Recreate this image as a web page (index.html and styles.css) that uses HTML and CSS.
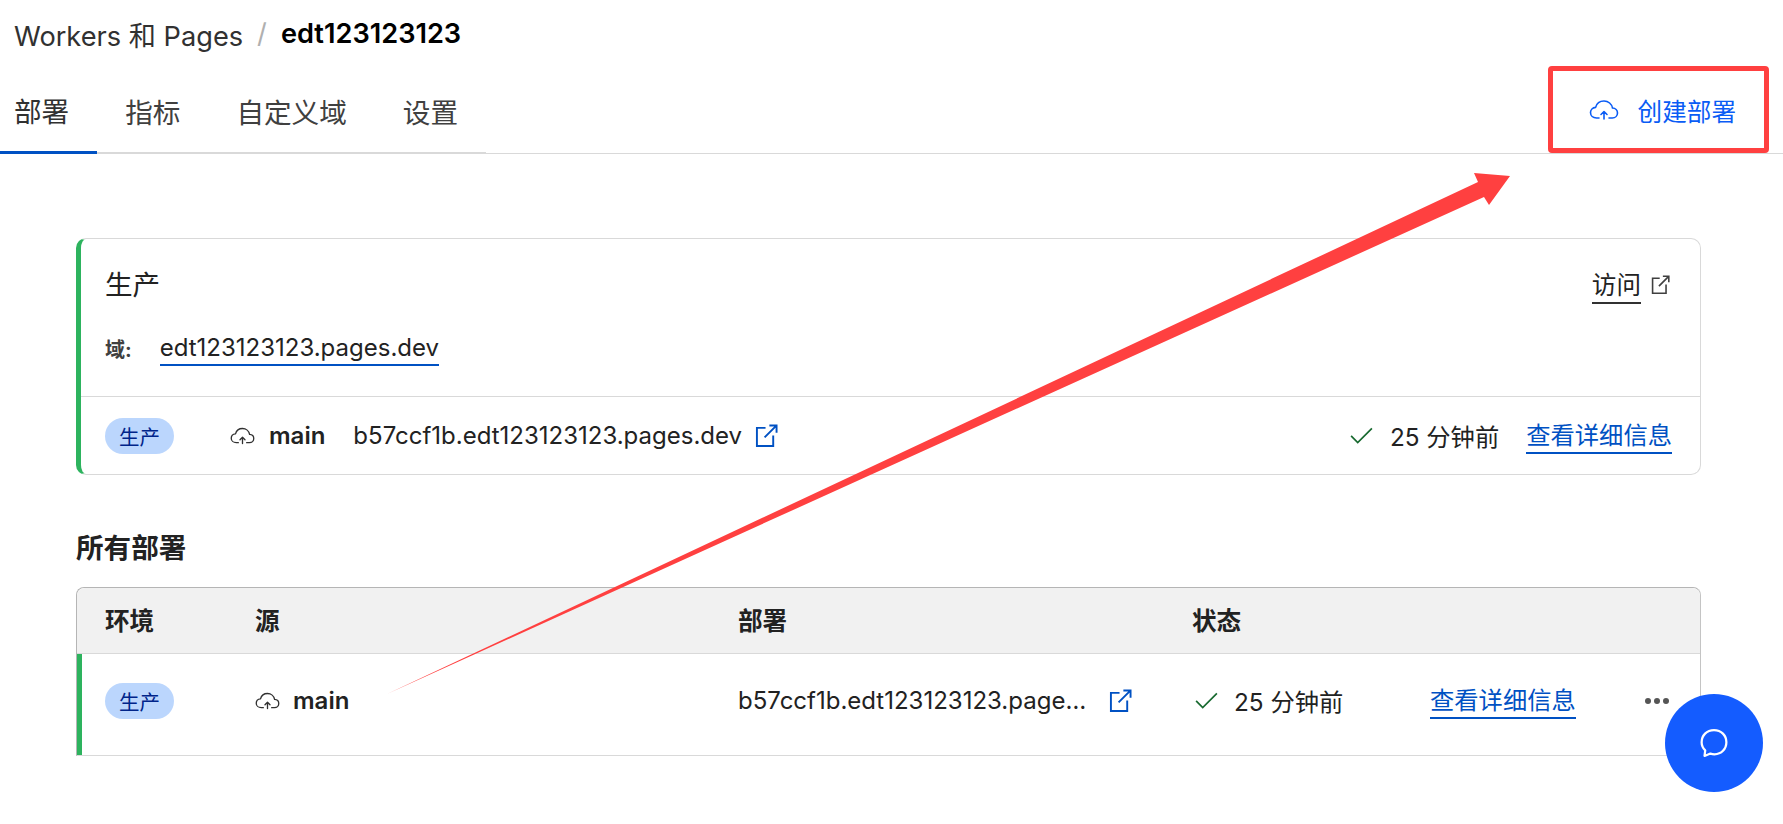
FILE: index.html
```html
<!DOCTYPE html>
<html lang="zh-CN">
<head>
    <meta charset="UTF-8">
    <title>edt123123123 - Workers 和 Pages</title>
    <link rel="stylesheet" href="styles.css">
</head>
<body>
    <svg width="0" height="0" class="defs">
        <symbol id="cloud" viewBox="0 0 30 24">
            <path fill="none" stroke="currentColor" stroke-width="1.6" stroke-linecap="round" stroke-linejoin="round" d="M10 20H7.500C4 20 1.500 17.600 1.500 14.600 1.500 11.800 3.700 9.600 6.600 9.400 7.600 5.600 11 3 15 3c4.300 0 7.800 3 8.500 7 2.900.2 5 2.300 5 5 0 2.800-2.200 5-5.200 5H20"/>
            <path fill="none" stroke="currentColor" stroke-width="1.600" stroke-linecap="round" stroke-linejoin="round" d="M15 21V14M12 16.500 15 13.500l3 3"/>
        </symbol>
        <symbol id="external" viewBox="0 0 24 24">
            <path fill="none" stroke="currentColor" stroke-width="2" d="M11 4H2V23H19V12"/>
            <path fill="none" stroke="currentColor" stroke-width="2" d="M10 14 22 2M15 1.500H22.500V9"/>
        </symbol>
        <symbol id="check" viewBox="0 0 24 18">
            <path fill="none" stroke="currentColor" stroke-width="1.800" d="M1 9.500 8 16.500 23 1.500"/>
        </symbol>
    </svg>

    <header class="page-head">
        <div class="crumbs">
            <span>Workers 和 Pages</span>
            <span class="crumb-sep">/</span>
            <strong>edt123123123</strong>
        </div>
        <div class="tabs-row">
            <nav class="tabs">
                <a class="tab active">部署</a>
                <a class="tab">指标</a>
                <a class="tab">自定义域</a>
                <a class="tab">设置</a>
            </nav>
            <a class="create-btn">
                <svg class="icon-cloud-lg"><use href="#cloud"/></svg>
                创建部署
            </a>
        </div>
    </header>

    <main class="content">
        <section class="prod-card">
            <div class="prod-top">
                <div class="prod-info">
                    <h2 class="prod-title">生产</h2>
                    <div class="domain-line">
                        <span class="domain-label">域:</span>
                        <a class="link-text">edt123123123.pages.dev</a>
                    </div>
                </div>
                <a class="visit">
                    <span>访问</span>
                    <svg class="icon-visit"><use href="#external"/></svg>
                </a>
            </div>
            <div class="prod-bottom">
                <span class="badge">生产</span>
                <svg class="icon-cloud"><use href="#cloud"/></svg>
                <b class="branch">main</b>
                <span class="deploy-url">b57ccf1b.edt123123123.pages.dev</span>
                <svg class="icon-ext"><use href="#external"/></svg>
                <span class="spacer"></span>
                <svg class="icon-check"><use href="#check"/></svg>
                <span class="status-text">25 分钟前</span>
                <a class="details">查看详细信息</a>
            </div>
        </section>

        <h3 class="all-title">所有部署</h3>

        <section class="deploy-table">
            <div class="table-row table-head">
                <span>环境</span>
                <span>源</span>
                <span>部署</span>
                <span>状态</span>
            </div>
            <div class="table-row table-body">
                <span class="cell"><span class="badge">生产</span></span>
                <span class="cell">
                    <svg class="icon-cloud"><use href="#cloud"/></svg>
                    <b class="branch">main</b>
                </span>
                <span class="cell">
                    <span class="deploy-url clipped">b57ccf1b.edt123123123.pages.dev</span>
                    <svg class="icon-ext"><use href="#external"/></svg>
                </span>
                <span class="cell">
                    <svg class="icon-check"><use href="#check"/></svg>
                    <span class="status-text">25 分钟前</span>
                </span>
                <span class="cell"><a class="details">查看详细信息</a></span>
                <span class="cell dots"><i></i><i></i><i></i></span>
            </div>
        </section>
    </main>

    <!-- annotation drawn over the screenshot -->
    <div class="red-box"></div>
    <svg class="arrow" width="1783" height="824" viewBox="0 0 1783 824">
        <polygon fill="#ff4040" points="387,694 1478,182 1474,173 1510,176 1489,205 1484,197"/>
    </svg>

    <button class="chat-btn">
        <svg viewBox="0 0 32 32" width="36" height="36">
            <path fill="none" stroke="#fff" stroke-width="2" stroke-linejoin="round" d="M16 4.500c6.500 0 11 4.800 11 10.800S22.500 26 16.500 26c-1.300 0-2.600-.2-3.700-.6L7.600 27.500l.6-5C6 20.500 5 18 5 15.300 5 9.300 9.500 4.500 16 4.500z"/>
        </svg>
    </button>
</body>
</html>
```

FILE: styles.css
```css
* {
    box-sizing: border-box;
}
body {
    margin: 0;
    height: 824px;
    overflow: hidden;
    background-color: #fff;
    color: #222;
    font-family: Inter, "Noto Sans CJK SC", sans-serif;
    font-size: 24px;
    position: relative;
}
.defs {
    position: absolute;
}
a {
    color: inherit;
}

/* header */
.crumbs {
    display: flex;
    align-items: center;
    height: 69px;
    padding: 0 0 2px 14px;
    font-size: 27.2px;
    color: #313131;
}
.crumb-sep {
    margin: 0 14px;
    color: #b0b0b0;
}
.crumbs strong {
    font-weight: 600;
    color: #000;
}
.tabs-row {
    display: flex;
    justify-content: space-between;
    height: 85px;
    border-bottom: 1px solid #d9d9d9;
}
.tabs {
    display: flex;
    margin-left: -14px;
    border-bottom: 2px solid #d9d9d9;
    height: 85px;
}
.tab {
    display: flex;
    align-items: center;
    padding: 0 28px 2px;
    height: 85px;
    font-size: 27.6px;
    color: #404040;
}
.tab.active {
    color: #313131;
    border-bottom: 3px solid #0051c3;
    padding-bottom: 0;
}
.create-btn {
    display: flex;
    align-items: center;
    gap: 19px;
    padding-right: 47px;
    color: #0a5cf5;
    font-size: 24.6px;
    height: 82px;
}
.icon-cloud-lg {
    width: 30px;
    height: 24px;
}

/* production card */
.content {
    padding: 84px 82px 0 76px;
}
.prod-card {
    height: 237px;
    border: 1px solid #d9d9d9;
    border-left: 5px solid #2db35e;
    border-radius: 10px;
}
.prod-top {
    display: flex;
    justify-content: space-between;
    height: 157px;
    padding: 28px 30px 0 24px;
}
.prod-title {
    margin: 0;
    font-size: 27.6px;
    font-weight: 400;
    line-height: 36px;
}
.domain-line {
    display: flex;
    align-items: center;
    gap: 28px;
    margin-top: 27px;
}
.domain-label {
    font-size: 20px;
    font-weight: 700;
    color: #404040;
}
.link-text {
    padding-top: 2px;
    line-height: 32px;
    border-bottom: 2px solid #0051c3;
}
.visit {
    display: flex;
    align-items: flex-start;
    gap: 10px;
    padding-top: 2px;
}
.visit span {
    font-size: 24.6px;
    line-height: 33px;
    border-bottom: 2px solid #313131;
}
.icon-visit {
    width: 19px;
    height: 19px;
    margin-top: 6px;
    color: #404040;
}
.prod-bottom {
    display: flex;
    align-items: center;
    height: 78px;
    padding: 0 28px 0 24px;
    border-top: 1px solid #d9d9d9;
}
.prod-bottom .icon-cloud {
    margin-left: 56px;
}
.prod-bottom .branch {
    margin-left: 14px;
}
.prod-bottom .deploy-url {
    margin-left: 28px;
}
.prod-bottom .icon-ext {
    margin-left: 13px;
}
.prod-bottom .status-text {
    margin-left: 17px;
}
.prod-bottom .details {
    margin-left: 27px;
}
.spacer {
    flex: 1;
}
.badge {
    display: inline-flex;
    align-items: center;
    justify-content: center;
    width: 69px;
    height: 36px;
    border-radius: 18px;
    background-color: #bbd6fd;
    color: #00248a;
    font-size: 20.5px;
}
.icon-cloud {
    width: 25px;
    height: 20px;
    color: #313131;
    flex: none;
}
.branch {
    font-weight: 600;
}
.icon-ext {
    width: 23px;
    height: 23px;
    color: #0051c3;
    flex: none;
}
.icon-check {
    width: 23px;
    height: 17px;
    color: #17692f;
    flex: none;
}
.status-text {
    font-size: 24.3px;
}
.details {
    color: #0051c3;
    font-size: 24.3px;
    line-height: 34px;
    border-bottom: 2px solid #0051c3;
}

/* all deployments */
.all-title {
    margin: 54px 0 20px;
    font-size: 27.6px;
    font-weight: 700;
    line-height: 38px;
}
.deploy-table {
    border: 1px solid #d9d9d9;
    border-top-color: #b5b5b5;
    border-left-color: #b5b5b5;
    border-right-color: #c4c4c4;
    border-radius: 8px 8px 0 0;
    height: 169px;
}
.table-row {
    display: grid;
    grid-template-columns: 150px 483px 454px 238px 215px 1fr;
    align-items: center;
}
.table-head {
    height: 66px;
    padding: 0 0 3px 28px;
    background-color: #f1f1f1;
    border-bottom: 1px solid #d9d9d9;
    border-radius: 8px 8px 0 0;
    font-size: 24.6px;
    font-weight: 700;
}
.table-body {
    height: 101px;
    padding: 0 0 8px 23px;
    border-left: 5px solid #2db35e;
}
.cell {
    display: flex;
    align-items: center;
}
.cell .branch {
    margin-left: 13px;
}
.clipped {
    width: 352px;
    white-space: nowrap;
    overflow: hidden;
    text-overflow: ellipsis;
    flex: none;
}
.cell .icon-ext {
    margin-left: 19px;
}
.cell .status-text {
    margin-left: 16px;
}
.cell .icon-check {
    margin-left: 3px;
}
.dots {
    gap: 3px;
}
.dots i {
    width: 6px;
    height: 6px;
    border-radius: 50%;
    background-color: #555;
}

/* overlays */
.red-box {
    position: absolute;
    left: 1548px;
    top: 66px;
    width: 221px;
    height: 87px;
    border: 5px solid #ff4040;
    border-radius: 4px;
}
.arrow {
    position: absolute;
    left: 0;
    top: 0;
    pointer-events: none;
}
.chat-btn {
    position: absolute;
    left: 1665px;
    top: 694px;
    width: 98px;
    height: 98px;
    border: none;
    border-radius: 50%;
    background-color: #145cff;
    display: flex;
    align-items: center;
    justify-content: center;
    padding: 0;
}
```
